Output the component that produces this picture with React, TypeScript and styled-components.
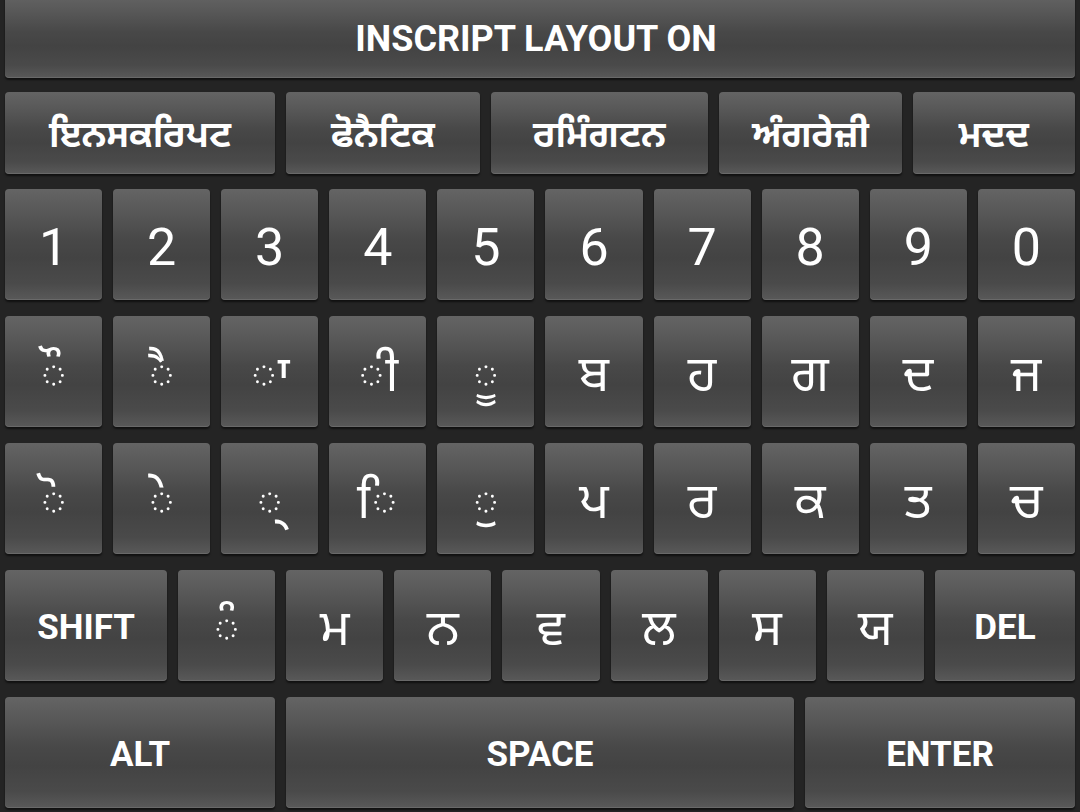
import styled, { createGlobalStyle } from "styled-components";

const GlobalStyle = createGlobalStyle`
  html, body {
    margin: 0;
    padding: 0;
    background: #242424;
  }
  body {
    font-family: Roboto, "Noto Sans Gurmukhi", "Noto Sans", "DejaVu Sans", sans-serif;
  }
`;

const Board = styled.div`
  width: 1080px;
  height: 812px;
  box-sizing: border-box;
  padding: 0 5px 0 5px;
  background: #242424;
  display: flex;
  flex-direction: column;
  gap: 16px;
  overflow: hidden;
`;

const Row = styled.div<{ $h: number; $pull?: number }>`
  display: flex;
  gap: 11px;
  height: ${(p) => p.$h}px;
  margin-bottom: ${(p) => -(p.$pull ?? 0)}px;
  flex: 0 0 auto;
`;

const Key = styled.div<{ $w?: number; $size?: number; $bold?: boolean; $drop?: number }>`
  flex: ${(p) => p.$w ?? 97} 1 0;
  display: flex;
  align-items: center;
  justify-content: center;
  box-sizing: border-box;
  padding-top: ${(p) => p.$drop ?? 3}px;
  border-radius: 4px;
  background: linear-gradient(
    to bottom,
    #646464 0%,
    #575757 22%,
    #484848 45%,
    #434343 62%,
    #4a4a4a 85%,
    #595959 100%
  );
  box-shadow: 0 2px 2px rgba(0, 0, 0, 0.55),
    inset 0 -1px 0 rgba(255, 255, 255, 0.1);
  color: #ffffff;
  font-size: ${(p) => p.$size ?? 50}px;
  font-weight: ${(p) => (p.$bold ? 700 : 400)};
  line-height: 1;
  white-space: nowrap;
  user-select: none;
`;

const TopBar = styled(Key)`
  flex: 0 0 auto;
  height: 84px;
  margin-top: -6px;
  margin-bottom: -2px;
  padding-top: 6px;
  padding-right: 8px;
`;

const modes: [string, number][] = [
  ["ਇਨਸਕਰਿਪਟ", 270],
  ["ਫੋਨੈਟਿਕ", 194],
  ["ਰਮਿੰਗਟਨ", 217],
  ["ਅੰਗਰੇਜ਼ੀ", 183],
  ["ਮਦਦ", 162],
];

const digits = ["1", "2", "3", "4", "5", "6", "7", "8", "9", "0"];
const rowA = ["ੌ", "ੈ", "ਾ", "ੀ", "ੂ", "ਬ", "ਹ", "ਗ", "ਦ", "ਜ"];
const rowB = ["ੋ", "ੇ", "੍", "ਿ", "ੁ", "ਪ", "ਰ", "ਕ", "ਤ", "ਚ"];
const rowC = ["ੰ", "ਮ", "ਨ", "ਵ", "ਲ", "ਸ", "ਯ"];

export default function App() {
  return (
    <>
      <GlobalStyle />
      <Board>
        <TopBar $size={36} $bold>
          INSCRIPT LAYOUT ON
        </TopBar>
        <Row $h={82} $pull={1}>
          {modes.map(([m, w]) => (
            <Key key={m} $w={w} $size={36} $bold>
              {m}
            </Key>
          ))}
        </Row>
        <Row $h={111}>
          {digits.map((d) => (
            <Key key={d} $size={52} $drop={7}>
              {d}
            </Key>
          ))}
        </Row>
        <Row $h={111}>
          {rowA.map((c) => (
            <Key key={c} $drop={5}>{c}</Key>
          ))}
        </Row>
        <Row $h={111}>
          {rowB.map((c) => (
            <Key key={c} $drop={5}>{c}</Key>
          ))}
        </Row>
        <Row $h={111}>
          <Key $w={162} $size={35} $bold $drop={4}>
            SHIFT
          </Key>
          {rowC.map((c) => (
            <Key key={c} $drop={5}>{c}</Key>
          ))}
          <Key $w={140} $size={35} $bold $drop={4}>
            DEL
          </Key>
        </Row>
        <Row $h={111}>
          <Key $w={270} $size={35} $bold $drop={4}>
            ALT
          </Key>
          <Key $w={508} $size={35} $bold $drop={4}>
            SPACE
          </Key>
          <Key $w={270} $size={35} $bold $drop={4}>
            ENTER
          </Key>
        </Row>
      </Board>
    </>
  );
}
